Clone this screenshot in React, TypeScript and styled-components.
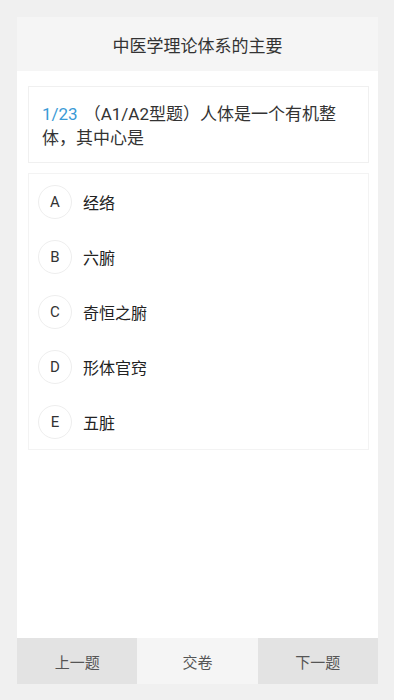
import React from 'react';
import styled, { createGlobalStyle } from 'styled-components';

const GlobalStyle = createGlobalStyle`
  html, body {
    margin: 0;
    padding: 0;
    background: #f0f0f0;
    font-family: Roboto, "Noto Sans CJK SC", sans-serif;
  }
  * { box-sizing: border-box; }
`;

const Page = styled.div`
  height: 100vh;
  padding: 17px 16px 16px 17px;
  display: flex;
`;

const Card = styled.div`
  flex: 1;
  display: flex;
  flex-direction: column;
  background: #fff;
`;

const Header = styled.div`
  height: 54px;
  background: #f5f5f5;
  display: flex;
  align-items: center;
  justify-content: center;
  font-size: 17px;
  color: #333;
`;

const Body = styled.div`
  flex: 1;
  padding: 15px 9px 0 11px;
  display: flex;
  flex-direction: column;
  gap: 10px;
`;

const Question = styled.div`
  border: 1px solid #f0f0f0;
  padding: 15px 28px 12px 13px;
  font-size: 17px;
  line-height: 24px;
  color: #333;
`;

const Index = styled.span`
  display: inline-block;
  color: #3a9ad6;
  font-size: 17px;
  margin-right: 6px;
`;

const Options = styled.div`
  border: 1px solid #f3f3f3;
  display: flex;
  flex-direction: column;
`;

const Option = styled.div`
  height: 55px;
  display: flex;
  align-items: center;
  padding-left: 9px;
  gap: 11px;
`;

const Letter = styled.div`
  width: 34px;
  height: 34px;
  border-radius: 50%;
  border: 1px solid #eeeeee;
  display: flex;
  align-items: center;
  justify-content: center;
  font-size: 15px;
  color: #333;
`;

const OptionText = styled.span`
  font-size: 16px;
  color: #222;
`;

const Footer = styled.div`
  height: 46px;
  display: flex;
`;

const FooterButton = styled.div<{ $main?: boolean }>`
  flex: 1;
  display: flex;
  align-items: center;
  justify-content: center;
  font-size: 15px;
  color: #555;
  background: ${p => (p.$main ? '#f5f5f5' : '#e3e3e3')};
`;

const options = [
  { key: 'A', text: '经络' },
  { key: 'B', text: '六腑' },
  { key: 'C', text: '奇恒之腑' },
  { key: 'D', text: '形体官窍' },
  { key: 'E', text: '五脏' },
];

const App: React.FC = () => {
  return (
    <Page>
      <GlobalStyle />
      <Card>
        <Header>中医学理论体系的主要</Header>
        <Body>
          <Question>
            <Index>1/23</Index>（A1/A2型题）人体是一个有机整体，其中心是
          </Question>
          <Options>
            {options.map(o => (
              <Option key={o.key}>
                <Letter>{o.key}</Letter>
                <OptionText>{o.text}</OptionText>
              </Option>
            ))}
          </Options>
        </Body>
        <Footer>
          <FooterButton>上一题</FooterButton>
          <FooterButton $main>交卷</FooterButton>
          <FooterButton>下一题</FooterButton>
        </Footer>
      </Card>
    </Page>
  );
};

export default App;
